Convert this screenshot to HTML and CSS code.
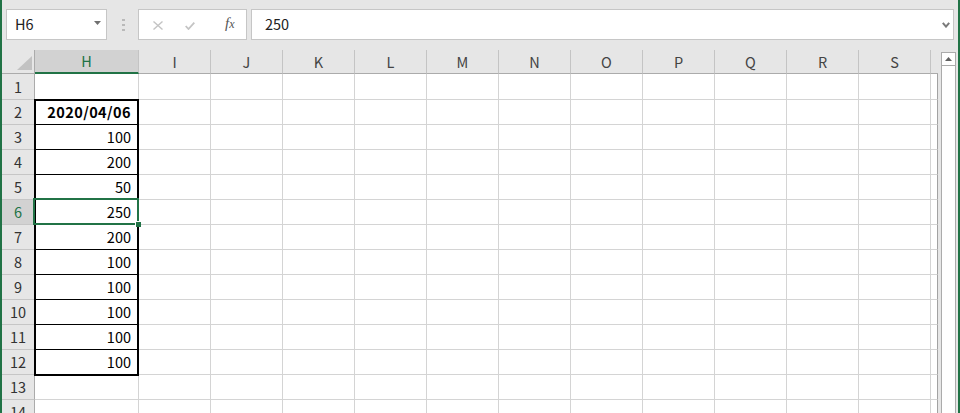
FILE: index.html
```html
<!DOCTYPE html>
<html lang="ja">
<head>
<meta charset="utf-8">
<title>Excel</title>
<link rel="stylesheet" href="styles.css">
</head>
<body>
<div class="app">
  <div class="fbar">
    <div class="namebox">
      <span class="nb-text">H6</span>
      <svg class="nb-arrow" width="7" height="4" viewBox="0 0 7 4"><polygon points="0,0 7,0 3.5,4" fill="#707070"/></svg>
    </div>
    <div class="grip">
      <svg width="3" height="12" viewBox="0 0 3 12"><rect x="0" y="0" width="3" height="2" fill="#b9b9b9"/><rect x="0" y="5" width="3" height="2" fill="#b9b9b9"/><rect x="0" y="10" width="3" height="2" fill="#b9b9b9"/></svg>
    </div>
    <div class="fbtns">
      <svg class="ic-x" width="10" height="9" viewBox="0 0 10 9"><path d="M0.5 0.5 L9.5 8.5 M9.5 0.5 L0.5 8.5" stroke="#c4c4c4" stroke-width="1.4" fill="none"/></svg>
      <svg class="ic-ok" width="10" height="8" viewBox="0 0 10 8"><path d="M0.7 4 L3.5 7 L9.3 0.7" stroke="#c4c4c4" stroke-width="1.8" fill="none"/></svg>
      <span class="fx"><i>f</i><i class="fx-x">x</i></span>
    </div>
    <div class="finput">
      <span class="fi-text">250</span>
      <svg class="chev" width="8" height="6" viewBox="0 0 8 6"><path d="M0.8 0.8 L4 4.6 L7.2 0.8" stroke="#7a7a7a" stroke-width="2" fill="none"/></svg>
    </div>
  </div>

  <div class="sheet">
    <div class="grid">
      <div class="row hdr">
        <div class="corner"><svg width="15" height="14" viewBox="0 0 15 14"><polygon points="15,0 15,14 0,14" fill="#c2c2c2"/></svg></div>
        <div class="sel">H</div><div>I</div><div>J</div><div>K</div><div>L</div><div>M</div><div>N</div><div>O</div><div>P</div><div>Q</div><div>R</div><div>S</div><div class="end"></div>
      </div>
      <div class="row r1"><div class="rh">1</div><div></div><div></div><div></div><div></div><div></div><div></div><div></div><div></div><div></div><div></div><div></div><div></div><div class="end"></div></div>
      <div class="row"><div class="rh rb">2</div><div class="v b bold">2020/04/06</div><div></div><div></div><div></div><div></div><div></div><div></div><div></div><div></div><div></div><div></div><div></div><div class="end"></div></div>
      <div class="row"><div class="rh rb">3</div><div class="v b">100</div><div></div><div></div><div></div><div></div><div></div><div></div><div></div><div></div><div></div><div></div><div></div><div class="end"></div></div>
      <div class="row"><div class="rh rb">4</div><div class="v b">200</div><div></div><div></div><div></div><div></div><div></div><div></div><div></div><div></div><div></div><div></div><div></div><div class="end"></div></div>
      <div class="row"><div class="rh rb">5</div><div class="v b">50</div><div></div><div></div><div></div><div></div><div></div><div></div><div></div><div></div><div></div><div></div><div></div><div class="end"></div></div>
      <div class="row"><div class="rh rb sel">6</div><div class="v b">250</div><div></div><div></div><div></div><div></div><div></div><div></div><div></div><div></div><div></div><div></div><div></div><div class="end"></div></div>
      <div class="row"><div class="rh rb">7</div><div class="v b">200</div><div></div><div></div><div></div><div></div><div></div><div></div><div></div><div></div><div></div><div></div><div></div><div class="end"></div></div>
      <div class="row"><div class="rh rb">8</div><div class="v b">100</div><div></div><div></div><div></div><div></div><div></div><div></div><div></div><div></div><div></div><div></div><div></div><div class="end"></div></div>
      <div class="row"><div class="rh rb">9</div><div class="v b">100</div><div></div><div></div><div></div><div></div><div></div><div></div><div></div><div></div><div></div><div></div><div></div><div class="end"></div></div>
      <div class="row"><div class="rh rb">10</div><div class="v b">100</div><div></div><div></div><div></div><div></div><div></div><div></div><div></div><div></div><div></div><div></div><div></div><div class="end"></div></div>
      <div class="row"><div class="rh rb">11</div><div class="v b">100</div><div></div><div></div><div></div><div></div><div></div><div></div><div></div><div></div><div></div><div></div><div></div><div class="end"></div></div>
      <div class="row"><div class="rh rb">12</div><div class="v b">100</div><div></div><div></div><div></div><div></div><div></div><div></div><div></div><div></div><div></div><div></div><div></div><div class="end"></div></div>
      <div class="row"><div class="rh">13</div><div></div><div></div><div></div><div></div><div></div><div></div><div></div><div></div><div></div><div></div><div></div><div></div><div class="end"></div></div>
      <div class="row"><div class="rh">14</div><div></div><div></div><div></div><div></div><div></div><div></div><div></div><div></div><div></div><div></div><div></div><div></div><div class="end"></div></div>
    </div>

    <div class="vscroll">
      <div class="track">
        <div class="upbtn"><svg width="7" height="4" viewBox="0 0 7 4"><polygon points="3.5,0 7,4 0,4" fill="#606060"/></svg></div>
      </div>
    </div>

    <div class="range-border"></div>
    <div class="selection"><span class="handle"></span></div>
  </div>
</div>
</body>
</html>
```

FILE: styles.css
```css
html, body {
  margin: 0;
  padding: 0;
}

body {
  width: 960px;
  height: 413px;
  overflow: hidden;
  background: #e6e6e6;
  font-family: "Noto Sans CJK JP", "Noto Sans", sans-serif;
  color: #000;
}

.app {
  width: 960px;
  height: 413px;
  box-sizing: border-box;
  border-left: 2px solid #217346;
  border-right: 2px solid #217346;
  background: #e6e6e6;
  overflow: hidden;
}

/* ---------- formula bar ---------- */
.fbar {
  height: 50px;
  box-sizing: border-box;
  padding-top: 9px;
  display: flex;
  align-items: flex-start;
}

.namebox,
.fbtns,
.finput {
  height: 31px;
  box-sizing: border-box;
  border: 1px solid #c6c6c6;
  background: #fff;
  display: flex;
  align-items: center;
}

.namebox {
  margin-left: 4px;
  width: 101px;
  padding-left: 8px;
  padding-right: 5px;
  justify-content: space-between;
}

.nb-text,
.fi-text {
  font-size: 14.5px;
  line-height: 1;
  color: #222;
}

.nb-arrow {
  margin-top: -4px;
}

.grip {
  width: 31px;
  height: 31px;
  display: flex;
  justify-content: center;
  align-items: center;
  padding-left: 1px;
  box-sizing: border-box;
}

.fbtns {
  width: 109px;
  padding-left: 14px;
}

.ic-x {
  margin-top: 2px;
}

.ic-ok {
  margin-left: 22px;
  margin-top: 3px;
}

.fx {
  margin-left: 30px;
  font-family: "Liberation Serif", serif;
  color: #555;
  font-size: 15px;
  line-height: 1;
  margin-top: -2px;
}

.fx-x {
  font-size: 12px;
  margin-left: 0;
}

.finput {
  margin-left: 4px;
  width: 703px;
  padding-left: 13px;
  padding-right: 3px;
  justify-content: space-between;
}

.chev {
  margin-top: 0;
}

/* ---------- sheet ---------- */
.sheet {
  position: relative;
  display: flex;
  height: 363px;
  overflow: hidden;
}

.grid {
  width: 936px;
  background: #fff;
}

.row {
  display: grid;
  grid-template-columns: 33px 104px repeat(11, 72px) 7px;
  height: 25px;
}

.row.hdr {
  height: 24px;
  background: #e6e6e6;
}

.row.r1 {
  height: 26px;
}

.row > div {
  box-sizing: border-box;
  border-right: 1px solid #d4d4d4;
  border-bottom: 1px solid #d4d4d4;
  font-size: 14.5px;
  line-height: 1;
}

.row > .end {
  border-right-color: #a2a2a2;
}

.hdr > div {
  background: #e6e6e6;
  border-right-color: #c4c4c4;
  border-bottom-color: #ababab;
  color: #444;
  display: flex;
  align-items: center;
  justify-content: center;
  padding-top: 1px;
}

.hdr > .end {
  border-right: none;
}

.hdr > .corner {
  border-right-color: #ababab;
  justify-content: flex-end;
  align-items: flex-end;
  padding: 0 2px 3px 0;
}

.hdr > .sel {
  background: #d2d2d2;
  color: #217346;
  border-bottom: 2px solid #217346;
}

.row > .rh {
  background: #e6e6e6;
  border-right-color: #ababab;
  border-bottom-color: #c6c6c6;
  color: #333;
  display: flex;
  align-items: center;
  justify-content: center;
  padding-top: 1px;
}

.row > .rh.sel {
  background: #d2d2d2;
  color: #217346;
}

.row > .v {
  display: flex;
  align-items: center;
  justify-content: flex-end;
  padding-right: 7px;
  padding-top: 1px;
}

.row > .b {
  border-bottom-color: #000;
}

.row > .bold {
  font-weight: bold;
  letter-spacing: 0.4px;
}

/* ---------- vertical scrollbar ---------- */
.vscroll {
  width: 20px;
  padding: 2px 2px 0 3px;
  box-sizing: border-box;
  display: flex;
}

.track {
  width: 15px;
  box-sizing: border-box;
  border-left: 1px solid #ababab;
  border-right: 1px solid #ababab;
  border-top: 1px solid #ababab;
  background: #fff;
}

.upbtn {
  height: 13px;
  box-sizing: border-box;
  border-bottom: 1px solid #ababab;
  display: flex;
  align-items: center;
  justify-content: center;
  padding-bottom: 1px;
}

/* ---------- overlays drawn over the cells ---------- */
.range-border {
  position: absolute;
  left: 32px;
  top: 49px;
  width: 105px;
  height: 277px;
  box-sizing: border-box;
  border: 2px solid #000;
  pointer-events: none;
}

.selection {
  position: absolute;
  left: 31px;
  top: 148px;
  width: 106px;
  height: 27px;
  box-sizing: border-box;
  border: 2px solid #217346;
}

.handle {
  position: absolute;
  right: -4px;
  bottom: -4px;
  width: 5px;
  height: 5px;
  background: #217346;
  border-left: 1px solid #fff;
  border-top: 1px solid #fff;
}
```
